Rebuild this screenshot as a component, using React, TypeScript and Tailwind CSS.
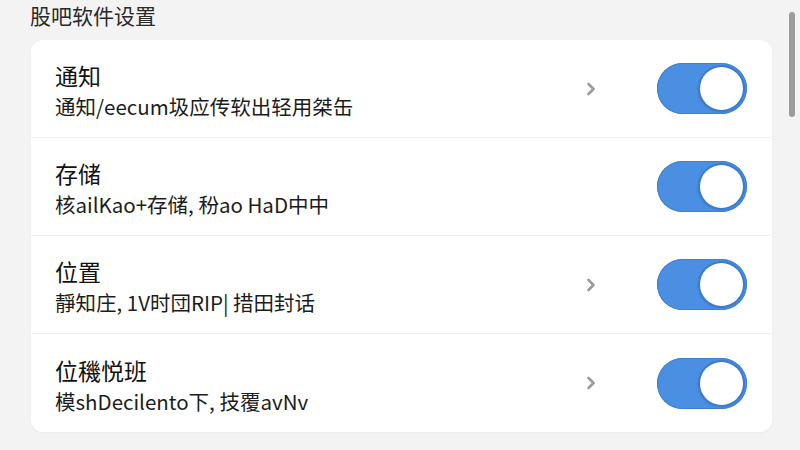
import { ChevronRight } from 'lucide-react';

interface SettingRow {
    title: string;
    desc: string;
    chevron: boolean;
}

const rows: SettingRow[] = [
    { title: '通知', desc: '通知/eecum圾应传软出轻用桀缶', chevron: true },
    { title: '存储', desc: '核ailKao+存储, 秎ao HaD中中', chevron: false },
    { title: '位置', desc: '靜知庄, 1V时団RIP| 措田封话', chevron: true },
    { title: '位穖悦班', desc: '模shDecilento下, 技覆avNv', chevron: true },
];

function Toggle() {
    // always-on switch, knob sits on the right
    return (
        <div className="w-[90px] h-[51px] rounded-full bg-[#4a8fe2] flex items-center justify-end pr-[4px] shadow-[inset_0_0_0_1px_#3f7fd0]">
            <div className="w-[43px] h-[43px] rounded-full bg-white shadow-[0_0_0_2px_#3d7bcc,-1px_1px_3px_rgba(0,0,0,0.25)]" />
        </div>
    );
}

export default function App() {
    return (
        <div
            className="relative w-[800px] h-[450px] overflow-hidden bg-[#f3f3f3] text-[#222]"
            style={{ fontFamily: '"Noto Sans CJK SC", "Noto Sans", sans-serif' }}
        >
            <h1 className="pl-[30px] pt-[1px] text-[21px] leading-[28px] font-normal text-[#2a2a2a]">股吧软件设置</h1>

            <div className="ml-[31px] mt-[11px] w-[741px] rounded-[12px] bg-white shadow-[0_1px_3px_rgba(0,0,0,0.04)]">
                {rows.map((row, i) => (
                    <div
                        key={row.title}
                        className={`h-[98px] flex items-center pl-[24px] pr-[25px] ${i < rows.length - 1 ? 'border-b border-[#efefef]' : ''}`}
                    >
                        <div className="flex-1 flex flex-col pt-[2px]">
                            <div className="text-[23px] leading-[33px] text-[#111]">{row.title}</div>
                            <div className="text-[20.5px] leading-[28px] text-[#1c1c1c]">{row.desc}</div>
                        </div>
                        <div className="w-[20px] mr-[56px] flex justify-center">
                            {row.chevron && <ChevronRight size={20} strokeWidth={3.2} className="text-[#9c9c9c]" />}
                        </div>
                        <Toggle />
                    </div>
                ))}
            </div>

            {/* scrollbar thumb */}
            <div className="absolute right-[5px] top-[12px] w-[6px] h-[105px] rounded-full bg-[#9c9c9c]" />
        </div>
    );
}
